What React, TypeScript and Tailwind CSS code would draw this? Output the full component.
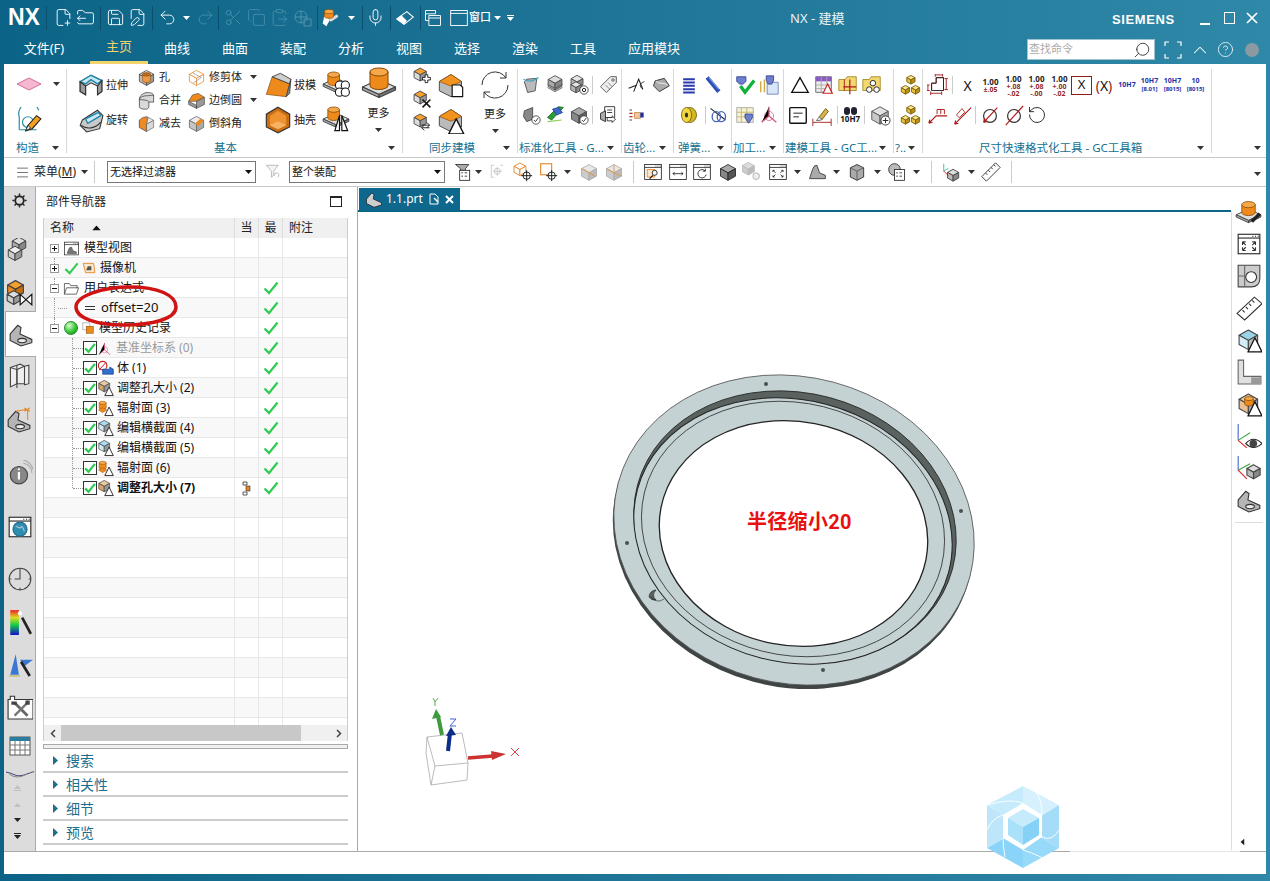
import type { ReactNode } from 'react'
import {
  FilePlus2, FolderOutput, Save, FilePen, Undo2, Redo2, Scissors, Copy, ClipboardPaste, Mic,
  Search, ChevronUp, CircleHelp, RotateCcw, Menu,
} from 'lucide-react'

/* ---------- small drawing helpers ---------- */

function Ic({ s = 22, children }: { s?: number; children: ReactNode }) {
  return (
    <svg width={s} height={s} viewBox="0 0 24 24" className="shrink-0">
      {children}
    </svg>
  )
}

function Iso({ t = '#e4e4e4', l = '#b5b5b5', r = '#8c8c8c', e = '#444', x = 0, y = 0, k = 1 }: { t?: string; l?: string; r?: string; e?: string; x?: number; y?: number; k?: number }) {
  return (
    <g transform={`translate(${x} ${y}) scale(${k})`} stroke={e} strokeWidth={1 / k} strokeLinejoin="round">
      <path d="M12 3 21 8 12 13 3 8Z" fill={t} />
      <path d="M3 8 12 13V22L3 17Z" fill={l} />
      <path d="M21 8 12 13V22L21 17Z" fill={r} />
    </g>
  )
}

function Cyl({ cx = 12, y = 3, rx = 6, h = 8, c = '#ee8a1c', d = '#f5a94a' }: { cx?: number; y?: number; rx?: number; h?: number; c?: string; d?: string }) {
  return (
    <g stroke="#8a4d08" strokeWidth="0.7">
      <path d={`M${cx - rx} ${y}V${y + h}A${rx} ${rx / 2.2} 0 0 0 ${cx + rx} ${y + h}V${y}Z`} fill={c} />
      <ellipse cx={cx} cy={y} rx={rx} ry={rx / 2.2} fill={d} />
    </g>
  )
}

function Plate({ y = 12 }: { y?: number }) {
  return (
    <g stroke="#444" strokeWidth="0.8" strokeLinejoin="round">
      <path d={`M12 ${y} 23 ${y + 5} 12 ${y + 10} 1 ${y + 5}Z`} fill="#dedede" />
      <path d={`M1 ${y + 5}V${y + 7}L12 ${y + 12}V${y + 10}Z`} fill="#aaa" />
      <path d={`M23 ${y + 5}V${y + 7}L12 ${y + 12}V${y + 10}Z`} fill="#777" />
    </g>
  )
}

function Warn({ x = 14, y = 13, s = 10 }: { x?: number; y?: number; s?: number }) {
  return <path d={`M${x} ${y + s} ${x + s / 2} ${y} ${x + s} ${y + s}Z`} fill="#fff" stroke="#111" strokeWidth="1.2" strokeLinejoin="round" />
}

function Badge({ kind = 'check', x = 18, y = 18 }: { kind?: 'check' | 'plus' | 'gear'; x?: number; y?: number }) {
  return (
    <g>
      <circle cx={x} cy={y} r="5" fill="#fff" stroke="#222" strokeWidth="0.9" />
      {kind === 'check' && <path d={`M${x - 2.5} ${y} ${x - 0.6} ${y + 2} ${x + 2.6} ${y - 2.4}`} fill="none" stroke="#222" strokeWidth="1" />}
      {kind === 'plus' && <path d={`M${x - 3} ${y}h6M${x} ${y - 3}v6`} stroke="#222" strokeWidth="1" />}
      {kind === 'gear' && <circle cx={x} cy={y} r="2" fill="none" stroke="#222" strokeWidth="1.2" />}
    </g>
  )
}

function Caret({ c = '#333', className = '' }: { c?: string; className?: string }) {
  return (
    <svg width="7" height="4" viewBox="0 0 7 4" className={`shrink-0 ${className}`}>
      <path d="M0 0h7L3.5 4Z" fill={c} />
    </svg>
  )
}

function Win({ children, s = 20 }: { children?: ReactNode; s?: number }) {
  return (
    <Ic s={s}>
      <rect x="2" y="3" width="20" height="18" fill="#fff" stroke="#222" />
      <path d="M2 6.5h20" stroke="#222" />
      <path d="M15 4.8h1M17.5 4.8h1M20 4.8h1" stroke="#222" />
      {children}
    </Ic>
  )
}

/* ---------- ribbon icons ---------- */

const Pink = () => (
  <svg width="26" height="14" viewBox="0 0 26 14" className="shrink-0">
    <path d="M13 1 25 7 13 13 1 7Z" fill="#f7b7d0" stroke="#cf6f99" />
  </svg>
)
const Sketch = () => (
  <Ic s={26}>
    <path d="M3 21V9A9 9 0 0 1 21 3M3 21h16" fill="none" stroke="#2b8ca8" strokeWidth="1.1" />
    <circle cx="11" cy="14" r="5" fill="none" stroke="#2b8ca8" strokeWidth="1.1" />
    <path d="M9 22 11 17 19 8 23 11 15 20Z" fill="#f3a21f" stroke="#222" strokeWidth="1" />
    <path d="M9 22 11 17 13.5 19.5Z" fill="#fff" stroke="#222" strokeWidth="0.8" />
  </Ic>
)
const Extrude = () => (
  <Ic s={26}>
    <path d="M2 9 12 3 22 8V18L18 21V13L12 10 7 13V21L2 18Z" fill="#d9d9d9" stroke="#333" />
    <path d="M2 9 12 3 22 8 18 11 12 7 7 11Z" fill="#cbe9f4" stroke="#1f86ae" strokeWidth="1.3" />
    <path d="M18 13V21L22 18V8ZM2 9V18L7 21V13Z" fill="#9a9a9a" stroke="#333" />
  </Ic>
)
const Revolve = () => (
  <Ic s={26}>
    <path d="M4 12 18 3 23 8 20 20 8 23 2 17Z" fill="#c9c9c9" stroke="#333" />
    <path d="M7 11 19 5 21 8 9 15Z" fill="#cbe9f4" stroke="#1f86ae" strokeWidth="1.2" />
    <path d="M3 17C8 21 16 20 21 14" fill="none" stroke="#333" />
  </Ic>
)
const Hole = () => (
  <Ic s={19}>
    <Iso t="#ddd" l="#bbb" r="#999" />
    <Cyl cx={12} y={8} rx={5} h={8} c="#eb9a45" d="#b86a1f" />
  </Ic>
)
const Unite = () => (
  <Ic s={19}>
    <path d="M3 11V20C3 22 7 23 10 23S15 22 15 20V14H21V6C21 3 17 2 13 2S3 5 3 11Z" fill="#d9d9d9" stroke="#444" />
    <path d="M3 11C3 8 8 6 12 6S21 5 21 6M15 14C15 12 10 11 3 11" fill="none" stroke="#444" />
  </Ic>
)
const Subtract = () => (
  <Ic s={19}>
    <Iso t="#ededed" l="#e9a26a" r="#d9d9d9" e="#777" />
    <path d="M3 8A9 9 0 0 1 14 5L12 13V22L3 17Z" fill="#ed8a28" stroke="#555" strokeWidth="0.8" />
  </Ic>
)
const Trim = () => (
  <Ic s={19}>
    <Iso t="#fff" l="#fff" r="#fff" e="#e68a2e" />
    <path d="M7 6 18 12 8 19" fill="none" stroke="#999" />
  </Ic>
)
const Blend = () => (
  <Ic s={19}>
    <path d="M2 13 7 5 14 3 22 8 12 13 8 13Z" fill="#ee8a1c" stroke="#444" strokeWidth="0.8" />
    <path d="M2 13 12 18V22L2 17ZM22 8V17L12 22V13Z" fill="#999" stroke="#444" strokeWidth="0.8" />
  </Ic>
)
const Chamfer = () => (
  <Ic s={19}>
    <Iso t="#ececec" l="#c5c5c5" r="#aaa" e="#666" />
    <path d="M10 12 17 6 21 8 14 15Z" fill="#ee8a1c" />
  </Ic>
)
const Draft = () => (
  <Ic s={28}>
    <path d="M2 20 7 5 22 11 19 22Z" fill="#ee8a1c" stroke="#8a4d08" strokeWidth="0.6" />
    <path d="M7 5 14 2 23 7 22 11Z" fill="#cfcfcf" stroke="#444" strokeWidth="0.8" />
    <path d="M22 11 23 7 22 19 19 22Z" fill="#888" stroke="#444" strokeWidth="0.8" />
  </Ic>
)
const Shell = () => (
  <Ic s={28}>
    <path d="M12 1 22 7V18L12 23 2 18V7Z" fill="#ca6e12" stroke="#333" />
    <path d="M12 4 19 8.5V16.5L12 20 5 16.5V8.5Z" fill="#ee9330" />
    <path d="M5 16.5 12 13 19 16.5 12 20Z" fill="#f7b163" />
  </Ic>
)
const Pattern = () => (
  <Ic s={28}>
    <Plate y={7} />
    <Cyl cx={10} y={4} rx={5} h={7} />
    <g fill="#fff" stroke="#111" strokeWidth="0.9">
      <circle cx="15" cy="13" r="3.5" /><circle cx="20" cy="13" r="3.5" />
      <circle cx="15" cy="19" r="3.5" /><circle cx="20" cy="19" r="3.5" />
    </g>
  </Ic>
)
const Mirror = () => (
  <Ic s={28}>
    <Plate y={7} />
    <Cyl cx={10} y={4} rx={5} h={7} />
    <path d="M11 22 15 9V22ZM17 9 22 22H17Z" fill="#fff" stroke="#111" strokeWidth="1" />
  </Ic>
)
const BigCyl = () => (
  <Ic s={36}>
    <Plate y={9} />
    <Cyl cx={12} y={4} rx={6} h={9} />
  </Ic>
)
const SyncBase = ({ children }: { children?: ReactNode }) => (
  <Ic s={21}>
    <Iso x={0} y={0} k={0.78} t="#f6a030" l="#dcdcdc" r="#999" />
    {children}
  </Ic>
)
const SyncBig = ({ children }: { children?: ReactNode }) => (
  <Ic s={28}>
    <path d="M2 9 12 3 21 9 21 18 12 22 2 17Z" fill="#bbb" stroke="#444" strokeWidth="0.8" />
    <path d="M2 9 12 3 21 9 12 13Z" fill="#f29320" stroke="#8a4d08" strokeWidth="0.6" />
    {children}
  </Ic>
)
const Cycle = () => (
  <svg width="30" height="30" viewBox="0 0 30 30" fill="none" stroke="#333" strokeWidth="1" className="shrink-0">
    <path d="M2 15A13 13 0 0 1 26 8M26 2V8H20" />
    <path d="M28 15A13 13 0 0 1 4 22M4 28V22H10" />
  </svg>
)
const Tri = () => (
  <Ic s={22}>
    <path d="M3 20 12 4 21 20Z" fill="#fff" stroke="#111" strokeWidth="1.4" />
  </Ic>
)

/* ---------- ribbon layout ---------- */

function Group({ className, label, labelClass = '', children }: { className: string; label: string; labelClass?: string; children: ReactNode }) {
  return (
    <div className={`flex flex-col h-[93px] relative shrink-0 ${className}`}>
      <div className="flex-1 min-h-0">{children}</div>
      <div className="h-[18px] flex items-center pr-[8px]">
        <span className={`text-[11.5px] text-[#16708f] whitespace-nowrap ${labelClass}`}>{label}</span>
        <Caret className="ml-auto" />
      </div>
      <span className="absolute right-0 top-[5px] bottom-[4px] w-px bg-[#d9d9d9]" />
    </div>
  )
}

function Cell({ children, w = 'w-[24px]' }: { children?: ReactNode; w?: string }) {
  return <span className={`h-[24px] flex items-center justify-center shrink-0 ${w}`}>{children}</span>
}

function Small({ icon, text, caret }: { icon: ReactNode; text: string; caret?: boolean }) {
  return (
    <div className="h-[20px] flex items-center gap-[3px] text-[11px] text-[#222] whitespace-nowrap">
      {icon}
      <span>{text}</span>
      {caret && <Caret className="absolute left-[183px]" />}
    </div>
  )
}

function Big({ icon, text }: { icon: ReactNode; text: string }) {
  return (
    <div className="h-[24px] flex items-center gap-[2px] text-[11px] text-[#222] whitespace-nowrap">
      {icon}
      <span>{text}</span>
    </div>
  )
}

function TwoRows({ top, bottom }: { top: ReactNode; bottom: ReactNode }) {
  return (
    <div className="pt-[9px] flex flex-col gap-[6px]">
      <div className="flex h-[24px] items-center">{top}</div>
      <div className="flex h-[24px] items-center">{bottom}</div>
    </div>
  )
}

const Div = () => <span className="w-px h-[18px] bg-[#ccc] shrink-0" />

function Tol({ a = '±.05', b }: { a?: string; b?: string }) {
  return (
    <span className="flex flex-col items-center w-[23px] shrink-0 text-[7px] leading-[7px] font-bold">
      <span className="text-[#222] text-[8px] leading-[9px]">1.00</span>
      <span className="text-[#8f2a2a]">{a}</span>
      {b && <span className="text-[#8f2a2a]">{b}</span>}
    </span>
  )
}

function Fit({ a, b }: { a: string; b: string }) {
  return (
    <span className="flex flex-col items-center w-[23px] shrink-0 text-[7px] leading-[8px] font-bold text-[#2530a8]">
      <span>{a}</span>
      <span className="text-[6px] leading-[8px]">{b}</span>
    </span>
  )
}

function Ribbon() {
  const gold = (
    <Ic s={22}>
      <Iso x={7} y={0} k={0.5} t="#fbe58a" l="#e7c040" r="#b98f1c" e="#7d6210" />
      <Iso x={1} y={11} k={0.5} t="#fbe58a" l="#e7c040" r="#b98f1c" e="#7d6210" />
      <Iso x={12} y={11} k={0.5} t="#fbe58a" l="#e7c040" r="#b98f1c" e="#7d6210" />
    </Ic>
  )
  return (
    <div className="h-[93px] bg-white flex shrink-0">
      <Group className="w-[63px]" label="构造" labelClass="ml-[12px]">
        <div className="flex flex-col pl-[12px] pt-[13px]">
          <div className="flex items-center gap-[11px] h-[14px]"><Pink /><Caret /></div>
          <div className="mt-[16px]"><Sketch /></div>
        </div>
      </Group>

      <Group className="w-[336px]" label="基本" labelClass="ml-[147px]">
        <div className="flex">
          <div className="pl-[11px] pt-[9px] flex flex-col gap-[11px] w-[70px]">
            <Big icon={<Extrude />} text="拉伸" />
            <Big icon={<Revolve />} text="旋转" />
          </div>
          <div className="pt-[3px] flex flex-col gap-[3px] w-[50px]">
            <Small icon={<Hole />} text="孔" />
            <Small icon={<Unite />} text="合并" />
            <Small icon={<Subtract />} text="减去" />
          </div>
          <div className="pt-[3px] flex flex-col gap-[3px] w-[77px]">
            <Small icon={<Trim />} text="修剪体" caret />
            <Small icon={<Blend />} text="边倒圆" caret />
            <Small icon={<Chamfer />} text="倒斜角" />
          </div>
          <div className="pt-[9px] flex flex-col gap-[11px] w-[58px]">
            <Big icon={<Draft />} text="拔模" />
            <Big icon={<Shell />} text="抽壳" />
          </div>
          <div className="pt-[6px] flex flex-col gap-[7px] w-[32px]">
            <Pattern />
            <Mirror />
          </div>
          <div className="flex flex-col items-center w-[49px] text-[11px] text-[#222] pt-[2px]">
            <BigCyl />
            <span className="mt-[3px]">更多</span>
            <Caret className="mt-[6px]" />
          </div>
        </div>
      </Group>

      <Group className="w-[115px]" label="同步建模" labelClass="ml-[26px]">
        <div className="flex">
          <div className="pl-[9px] pt-[2px] flex flex-col gap-[2px] w-[34px]">
            <SyncBase><path d="M15 10h3v3h3v3h-3v3h-3v-3h-3v-3h3Z" fill="#fff" stroke="#111" /></SyncBase>
            <SyncBase><path d="M12 12 21 21M21 12 12 21" stroke="#111" strokeWidth="1.8" /></SyncBase>
            <SyncBase><path d="M11 15h9M17 12l3 3-3 3M20 18h-9M14 15l-3 3 3 3" fill="none" stroke="#111" /></SyncBase>
          </div>
          <div className="pt-[7px] flex flex-col gap-[7px] w-[36px]">
            <SyncBig><path d="M13 12h7l2 2v8h-9Z" fill="#fff" stroke="#111" /></SyncBig>
            <SyncBig><Warn x={10} y={11} s={13} /></SyncBig>
          </div>
          <div className="flex flex-col items-center w-[44px] text-[11px] text-[#222] pt-[6px]">
            <Cycle />
            <span className="mt-[6px]">更多</span>
            <Caret className="mt-[6px]" />
          </div>
        </div>
      </Group>

      <Group className="w-[104px]" label="标准化工具 - G..." labelClass="ml-[1px]">
        <TwoRows
          top={<>
            <span className="w-[2px]" />
            <Cell><Ic s={20}><path d="M7 5 19 4 17 19 8 21 4 8Z" fill="#bbb" stroke="#444" /><path d="M3 5C9 9 14 8 21 3" fill="none" stroke="#35a7c4" strokeWidth="1.3" /></Ic></Cell>
            <Cell><Ic s={20}><Iso x={1} y={-2} k={0.92} t="#ddd" l="#aaa" r="#888" /><path d="M3 11 12 16 21 11M3 15 12 20 21 15" fill="none" stroke="#555" /></Ic></Cell>
            <Cell><Ic s={20}><Iso x={0} y={-2} k={0.8} /><Iso x={0} y={6} k={0.7} /><Badge kind="gear" /></Ic></Cell>
            <span className="w-[2px]" /><Div />
            <Cell w="w-[29px]"><Ic s={20}><path d="M3 14 15 2 22 2 22 9 10 21Z" fill="#eee" stroke="#444" /><circle cx="18" cy="6" r="1.5" fill="#fff" stroke="#444" /><path d="M9 12 14 17M12 9 17 14" stroke="#777" /></Ic></Cell>
          </>}
          bottom={<>
            <span className="w-[2px]" />
            <Cell><Ic s={20}><path d="M4 7 14 3 14 17 7 20 3 14Z" fill="#888" stroke="#444" /><Badge /></Ic></Cell>
            <Cell><Ic s={20}><path d="M3 15 8 18 22 3 16 2Z" fill="#2c9a35" stroke="#156a1e" /><path d="M9 5 16 3 21 9 14 12Z" fill="#3f67cf" stroke="#223f8e" /><path d="M3 20 20 18" stroke="#8bd05a" strokeWidth="1.5" /></Ic></Cell>
            <Cell><Ic s={20}><Iso t="#aaa" l="#888" r="#666" /><Badge /></Ic></Cell>
            <span className="w-[2px]" /><Div />
            <Cell w="w-[29px]"><Ic s={20}><path d="M8 2h12v13H8Z" fill="#fff" stroke="#222" /><path d="M11 6h6M11 9h6" stroke="#222" /><path d="M3 10 9 7V20L3 17Z" fill="#aaa" stroke="#222" /><path d="M11 15h6v-2l4 4-4 4v-2h-6Z" fill="#fff" stroke="#222" /></Ic></Cell>
          </>}
        />
      </Group>

      <Group className="w-[52px]" label="齿轮..." labelClass="ml-[1px]">
        <TwoRows
          top={<>
            <span className="w-[3px]" />
            <Cell><Ic s={20}><path d="M2 16 12 12M8 20 14 5 19 17" fill="none" stroke="#222" strokeWidth="1.3" /><path d="M19 17C15 14 14 10 21 8" fill="none" stroke="#222" /></Ic></Cell>
            <Cell><Ic s={20}><path d="M5 7 16 4 22 13 10 20 3 13Z" fill="#aaa" stroke="#222" /><path d="M6 7C10 12 14 8 20 12" fill="none" stroke="#fff" /></Ic></Cell>
          </>}
          bottom={<>
            <span className="w-[3px]" />
            <Cell><Ic s={20}><path d="M3 6h3M3 10h3M3 14h3M3 18h3" stroke="#222" /><path d="M3 10h4M3 14h4" stroke="#d22" /><path d="M9 9h7v7H9Z" fill="#f1c79c" stroke="#c78a4a" /><rect x="16" y="9" width="4" height="6" fill="#2330a0" /></Ic></Cell>
          </>}
        />
      </Group>

      <Group className="w-[58px]" label="弹簧..." labelClass="ml-[4px]">
        <TwoRows
          top={<>
            <span className="w-[3px]" />
            <Cell><Ic s={20}><g stroke="#2a3bb0" strokeWidth="2.4"><path d="M5 5h14M5 9h14M5 13h14M5 17h14M5 21h14" /></g></Ic></Cell>
            <Cell><Ic s={20}><path d="M5 3 19 20" stroke="#2c51b8" strokeWidth="5" /><path d="M7 3 19 17" stroke="#8ea4e8" strokeWidth="1.3" /></Ic></Cell>
          </>}
          bottom={<>
            <span className="w-[3px]" />
            <Cell><Ic s={20}><ellipse cx="13" cy="12" rx="8" ry="9" fill="#d5b51c" stroke="#6a5b10" /><ellipse cx="9" cy="12" rx="6" ry="9" fill="#f2d63c" stroke="#6a5b10" /><ellipse cx="9" cy="12" rx="2" ry="3" fill="#333" /></Ic></Cell>
            <span className="w-[4px]" /><Div />
            <Cell><Ic s={20}><path d="M3 4 21 18" stroke="#222" strokeWidth="1.3" /><ellipse cx="16" cy="14" rx="5" ry="6" fill="none" stroke="#4a66bd" strokeWidth="1.6" /><ellipse cx="10" cy="14" rx="5" ry="6" fill="none" stroke="#4a66bd" strokeWidth="1.6" /></Ic></Cell>
          </>}
        />
      </Group>

      <Group className="w-[52px]" label="加工..." labelClass="ml-[1px]">
        <TwoRows
          top={<>
            <span className="w-[1px]" />
            <Cell><Ic s={22}><path d="M3 3h10v5l-3 3H6L3 8Z" fill="#6d7fce" stroke="#3b4a9a" /><path d="M7 13 12 20 22 7" fill="none" stroke="#12b13b" strokeWidth="3.6" /></Ic></Cell>
            <Cell><Ic s={22}><path d="M3 8v12M7 6v14" stroke="#d0a93d" strokeWidth="1.5" /><path d="M10 9h12v13H10Z" fill="#d9e6f7" stroke="#6c89b8" /><path d="M9 2h8v5l-2 4h-4L9 7Z" fill="#6d7fce" stroke="#3b4a9a" /></Ic></Cell>
          </>}
          bottom={<>
            <span className="w-[1px]" />
            <Cell><Ic s={22}><path d="M3 4h18v16H3Z" fill="#f6f2d6" stroke="#a8a8a8" /><path d="M3 9h18M3 14h18M8 4v16M14 4v16" stroke="#c4b56a" /><path d="M12 11h8v4l-4 6-4-6Z" fill="#6d7fce" stroke="#3b4a9a" /></Ic></Cell>
            <Cell><Ic s={22}><circle cx="12" cy="13" r="5" fill="none" stroke="#d87a96" /><path d="M12 3V13L4 20M12 13 20 20" stroke="#d25b82" strokeWidth="1.4" /></Ic></Cell>
          </>}
        />
      </Group>

      <Group className="w-[110px]" label="建模工具 - GC工..." labelClass="ml-[1px]">
        <TwoRows
          top={<>
            <span className="w-[4px]" />
            <Cell><Tri /></Cell>
            <Cell><Ic s={22}><path d="M3 3h17v17H3Z" fill="#eee" stroke="#666" /><path d="M3 3h17v5H3Z" fill="#8a5bc4" /><path d="M3 12h17M3 16h17M9 3v17M15 3v17" stroke="#aaa" /><path d="M11 21 16 11 21 21Z" fill="#fff" stroke="#c22" strokeWidth="1.3" /></Ic></Cell>
            <Cell><Ic s={22}><path d="M2 6h7l2-3h10v15H2Z" fill="#f3d871" stroke="#a78d2c" /><path d="M14 6v16M7 14h14" stroke="#b01818" strokeWidth="1.3" /><path d="M8 6v12" stroke="#b01818" /></Ic></Cell>
            <Cell><Ic s={22}><path d="M2 6h7l2-3h10v15H2Z" fill="#f3d871" stroke="#a78d2c" /><circle cx="9" cy="17" r="3" fill="#fff" stroke="#222" /><circle cx="17" cy="17" r="3" fill="#fff" stroke="#222" /><circle cx="13" cy="10" r="3" fill="#fff" stroke="#222" /></Ic></Cell>
          </>}
          bottom={<>
            <span className="w-[3px]" />
            <Cell><Ic s={22}><rect x="3" y="4" width="18" height="17" rx="1" fill="#fff" stroke="#111" strokeWidth="1.5" /><path d="M7 10h10M7 14h6" stroke="#111" /></Ic></Cell>
            <Cell><Ic s={22}><path d="M2 20h20M2 16v8M22 16v8" stroke="#a22" /><path d="M9 14 16 5 19 8 12 17Z" fill="#d9b24c" stroke="#6a5b10" /><path d="M6 18 9 14 12 17 9 18Z" fill="#eee" stroke="#666" /></Ic></Cell>
            <span className="w-[4px]" /><Div />
            <Cell w="w-[25px]">
              <span className="flex flex-col items-center leading-none">
                <span className="flex gap-px"><span className="w-[6px] h-[8px] rounded-full bg-[#223]" /><span className="w-[6px] h-[8px] rounded-full bg-[#223]" /></span>
                <span className="text-[8px] font-bold text-[#111]">10H7</span>
              </span>
            </Cell>
            <span className="w-[2px]" /><Div />
            <Cell w="w-[29px]"><Ic s={22}><Iso t="#e2e2e2" l="#c8c8c8" r="#aaa" e="#555" /><Badge kind="plus" /></Ic></Cell>
          </>}
        />
      </Group>

      <Group className="w-[29px]" label="?.." labelClass="ml-[1px]">
        <TwoRows top={<><span className="w-[4px]" /><Cell>{gold}</Cell></>} bottom={<><span className="w-[4px]" /><Cell>{gold}</Cell></>} />
      </Group>

      <Group className="w-[289px]" label="尺寸快速格式化工具 - GC工具箱" labelClass="ml-[56px]">
        <TwoRows
          top={<>
            <span className="w-[3px]" />
            <Cell><Ic s={22}><path d="M5 18V10H10V4H18V18M4 21h12M4 19v4M16 19v4M9 1h8M9 0v3M17 0v3M21 5v12M19 5h4M19 17h4M1 12v6M0 12h3M0 18h3" fill="none" stroke="#a41e1e" /><path d="M5 18V10H10V4H18V18Z" fill="none" stroke="#222" /></Ic></Cell>
            <span className="w-[2px]" /><Div /><span className="w-[3px]" />
            <span className="w-[23px] text-center text-[14px] text-[#111] shrink-0">X</span>
            <Tol a="±.05" />
            <Tol a="+.08" b="-.02" />
            <Tol a="+.08" b="-.00" />
            <Tol a="+.00" b="-.02" />
            <span className="w-[21px] h-[19px] border-[1.5px] border-[#8d1c1c] text-[13px] leading-[15px] text-center text-[#111] shrink-0">X</span>
            <span className="w-[24px] text-[14px] text-center text-[#111] shrink-0"><span className="text-[#8d1c1c]">(</span>X<span className="text-[#8d1c1c]">)</span></span>
            <span className="w-[22px] text-[7px] font-bold text-center text-[#2530a8] shrink-0">10H7</span>
            <Fit a="10H7" b="[8.01]" />
            <Fit a="10H7" b="[8015]" />
            <Fit a="10" b="[8015]" />
          </>}
          bottom={<>
            <span className="w-[3px]" />
            <Cell><Ic s={22}><path d="M2 21 10 13H22M2 21l1-4M2 21l4-1" fill="none" stroke="#b01818" strokeWidth="1.2" /><path d="M11 6v5M15 6v5M19 6v5M11 6h8" stroke="#b01818" /></Ic></Cell>
            <Cell><Ic s={22}><path d="M4 22 22 4M4 22l1-4M4 22l4-1" fill="none" stroke="#b01818" strokeWidth="1.2" /><path d="M6 12 12 5 15 9 9 15Z" fill="none" stroke="#b01818" strokeWidth="0.9" /></Ic></Cell>
            <span className="w-[1px]" /><Div /><span className="w-[2px]" />
            <Cell><Ic s={22}><circle cx="12" cy="13" r="7" fill="#fff" stroke="#333" strokeWidth="1.3" /><path d="M20 4 5 20M5 20l1-4M5 20l4-1" fill="none" stroke="#b01818" strokeWidth="1.3" /></Ic></Cell>
            <Cell><Ic s={22}><circle cx="12" cy="13" r="7" fill="#fff" stroke="#333" strokeWidth="1.3" /><path d="M22 2 3 23" stroke="#b01818" strokeWidth="1.3" /></Ic></Cell>
            <Cell w="w-[22px]"><RotateCcw size={20} strokeWidth={1.2} className="text-[#333]" /></Cell>
          </>}
        />
      </Group>

      <div className="flex-1 flex items-end justify-end pr-[5px] pb-[7px]"><Caret /></div>
    </div>
  )
}

/* ---------- top bars ---------- */

function TitleBar() {
  const ic = { size: 19, strokeWidth: 1.15, className: 'text-white shrink-0' }
  const off = { size: 19, strokeWidth: 1, className: 'text-[#4f93ad] shrink-0' }
  const sep = <span className="block w-px h-[24px] bg-[#0a4f6c] shrink-0" />
  return (
    <div className="h-[35px] flex items-center relative text-white shrink-0">
      <span className="ml-[4px] w-[38px] text-[23px] font-bold font-['Liberation_Sans',sans-serif] leading-none">NX</span>
      {sep}
      <div className="flex items-center gap-[2px] ml-[6px]">
        <span className="w-[20px] flex justify-center"><FilePlus2 {...ic} /></span>
        <span className="w-[20px] flex justify-center"><FolderOutput {...ic} /></span>
      </div>
      <span className="ml-[5px]">{sep}</span>
      <div className="flex items-center gap-[2px] ml-[4px]">
        <span className="w-[20px] flex justify-center"><Save {...ic} /></span>
        <span className="w-[20px] flex justify-center"><FilePen {...ic} /></span>
      </div>
      <span className="ml-[5px]">{sep}</span>
      <span className="w-[24px] ml-[2px] flex justify-center"><Undo2 {...ic} /></span>
      <Caret c="#fff" className="ml-[4px]" />
      <span className="w-[22px] ml-[4px] flex justify-center"><Redo2 {...off} /></span>
      <span className="ml-[2px]">{sep}</span>
      <div className="flex items-center gap-[3px] ml-[4px]">
        <span className="w-[20px] flex justify-center"><Scissors {...off} /></span>
        <span className="w-[20px] flex justify-center"><Copy {...off} /></span>
        <span className="w-[20px] flex justify-center"><ClipboardPaste {...off} /></span>
        <span className="w-[20px] flex justify-center"><svg width="19" height="19" viewBox="0 0 19 19" fill="none" stroke="#4f93ad"><circle cx="8" cy="9" r="6" /><path d="M2 9h12M8 3v12M11 11h7v7h-7Z" /></svg></span>
      </div>
      <span className="ml-[5px]">{sep}</span>
      <span className="ml-[1px]"><Ic s={22}><path d="M6 9 12 14 8 21 4 18Z" fill="#fff" /><path d="M10 13 20 8 21 11 13 16Z" fill="#ddd" /><Cyl cx={11} y={5} rx={5} h={5} /></Ic></span>
      <Caret c="#fff" className="ml-[7px]" />
      <span className="ml-[7px]">{sep}</span>
      <span className="w-[24px] flex justify-center"><Mic {...ic} /></span>
      <span className="ml-[3px]">{sep}</span>
      <span className="ml-[3px]"><Ic s={22}><path d="M3 13 14 5 21 11 11 19Z" fill="none" stroke="#fff" strokeWidth="1.2" /><path d="M3 13 8 9 14 15 11 19Z" fill="#fff" /></Ic></span>
      <span className="ml-[4px]">{sep}</span>
      <span className="ml-[2px]"><Ic s={20}><path d="M3 3h12v4H3ZM7 9h14v12H7Z" fill="none" stroke="#fff" strokeWidth="1.1" /><path d="M3 7v8h4M7 12h14" fill="none" stroke="#fff" strokeWidth="1.1" /></Ic></span>
      <span className="ml-[6px]"><Ic s={20}><rect x="2" y="3" width="20" height="18" fill="none" stroke="#fff" strokeWidth="1.1" /><path d="M2 6.5h20" stroke="#fff" strokeWidth="1.1" /></Ic></span>
      <span className="text-[11px] font-medium">窗口</span>
      <Caret c="#fff" className="ml-[3px]" />
      <span className="ml-[6px] flex flex-col gap-[1px]"><span className="w-[7px] h-px bg-white" /><Caret c="#fff" /></span>

      <span className="absolute left-[786px] top-[9px] text-[13px] text-[#e9f2f5] whitespace-nowrap">NX - 建模</span>
      <span className="absolute left-[1108px] top-[12px] text-[13px] leading-[16px] font-bold tracking-[0.6px] font-['Liberation_Sans',sans-serif]">SIEMENS</span>
      <div className="absolute left-[1196px] top-0 h-[35px] flex items-center">
        <span className="w-[10px] h-[2px] bg-white mt-[12px]" />
        <span className="w-[11px] h-[12px] border border-white ml-[14px]" />
        <svg width="12" height="12" viewBox="0 0 12 12" className="ml-[11px]" stroke="#fff" strokeWidth="1.7"><path d="M1 1 11 11M11 1 1 11" /></svg>
      </div>
    </div>
  )
}

function MenuTabs() {
  const tabs = [
    ['文件(F)', 'w-[60px] ml-[10px]'],
    ['曲线', 'w-[58px]'],
    ['曲面', 'w-[58px]'],
    ['装配', 'w-[58px]'],
    ['分析', 'w-[58px]'],
    ['视图', 'w-[58px]'],
    ['选择', 'w-[58px]'],
    ['渲染', 'w-[58px]'],
    ['工具', 'w-[58px]'],
    ['应用模块', 'w-[84px]'],
  ]
  return (
    <div className="h-[29px] flex text-[13px] text-white shrink-0 relative">
      <span className={`h-full flex items-center justify-center pb-[2px] ${tabs[0][1]}`}>{tabs[0][0]}</span>
      <span className="ml-[16px] w-[58px] h-full flex items-center justify-center pb-[2px] text-[#f3d36b] border-b-[3px] border-[#f3d36b]">主页</span>
      {tabs.slice(1).map(([t, c]) => (
        <span key={t} className={`h-full flex items-center justify-center pb-[2px] ${c}`}>{t}</span>
      ))}
      <div className="absolute left-[1023px] top-[4px] w-[128px] h-[21px] bg-white border border-[#9fc2d0] flex items-center pl-[1px] pr-[3px] justify-between text-[11px] text-[#aaa]">
        <span>查找命令</span>
        <Search size={18} strokeWidth={1.1} className="text-[#222] -scale-x-100" />
      </div>
      <div className="absolute left-[1160px] top-[4px] h-[21px] flex items-center text-white">
        <svg width="18" height="18" viewBox="0 0 18 18" fill="none" stroke="#fff" strokeWidth="1.2"><path d="M1 5V1H5M13 1H17V5M17 13V17H13M5 17H1V13" /></svg>
        <ChevronUp size={22} strokeWidth={1.1} className="ml-[7px]" />
        <CircleHelp size={17} strokeWidth={1.1} className="ml-[6px]" />
        <span className="ml-[11px] w-[14px] h-[14px] rounded-full bg-[#8a9aa1]" />
      </div>
    </div>
  )
}

function Select({ className, text }: { className: string; text: string }) {
  return (
    <div className={`h-[22px] border border-[#777] bg-white flex items-center justify-between pl-[2px] pr-[3px] text-[11px] text-[#111] shrink-0 ${className}`}>
      <span>{text}</span>
      <Caret c="#111" />
    </div>
  )
}

function Slot({ w, children }: { w: string; children: ReactNode }) {
  return <span className={`flex items-center justify-center shrink-0 ${w}`}>{children}</span>
}

function Toolbar() {
  const tbSep = <span className="block w-px h-[22px] bg-[#ccc] shrink-0" />
  return (
    <div className="h-[30px] bg-white border-y border-[#c9c9c9] flex items-center shrink-0 relative">
      <Menu size={15} strokeWidth={1} className="ml-[11px] text-[#222]" />
      <span className="ml-[4px] text-[12px] text-[#222] whitespace-nowrap">菜单(<span className="underline">M</span>)</span>
      <Caret className="ml-[5px]" />
      <span className="ml-[6px]">{tbSep}</span>
      <span className="ml-[12px]"><Select className="w-[149px]" text="无选择过滤器" /></span>
      <span className="w-[33px] flex justify-center">
        <Ic s={18}><path d="M3 3h16l-6 8v5l-3 3v-8Z" fill="#f4f4f4" stroke="#aaa" /><path d="M14 17a3 3 0 1 1 4 2" fill="none" stroke="#aaa" /></Ic>
      </span>
      <Select className="w-[156px]" text="整个装配" />

      <Slot w="w-[23px] ml-[6px]"><Ic s={20}><path d="M3 3h16l-4 5v2H9V8Z" fill="#aaa" stroke="#333" /><rect x="8" y="10" width="12" height="12" fill="#fff" stroke="#222" /><path d="M10 13h2M14 13h3M10 17h2M14 17h3" stroke="#222" /></Ic></Slot>
      <Caret className="ml-[1px]" />
      <Slot w="w-[32px]"><Ic s={18}><path d="M7 3H3V19H7M15 3h4" fill="none" stroke="#bbb" /><circle cx="11" cy="11" r="4" fill="none" stroke="#bbb" /><path d="M11 5v12M5 11h12" stroke="#bbb" /></Ic></Slot>
      <Slot w="w-[18px]"><Ic s={22}><Iso k={0.72} t="#fff" l="#fff" r="#fff" e="#e58526" /><circle cx="16" cy="16" r="4" fill="#fff" stroke="#111" /><path d="M16 10v12M10 16h12" stroke="#111" /></Ic></Slot>
      <Slot w="w-[32px]"><Ic s={22}><rect x="4" y="3" width="12" height="12" fill="none" stroke="#e58526" strokeWidth="1.2" /><circle cx="16" cy="16" r="4" fill="#fff" stroke="#111" /><path d="M16 10v12M10 16h12" stroke="#111" /></Ic></Slot>
      <Caret />
      <Slot w="w-[36px]"><Ic s={20}><Iso t="#e8e8e8" l="#ccc" r="#bbb" e="#aaa" /><path d="M4 8 19 17" stroke="#e59443" strokeWidth="1.2" /></Ic></Slot>
      <Slot w="w-[14px]"><Ic s={20}><Iso t="#e8e8e8" l="#ccc" r="#bbb" e="#aaa" /><path d="M12 3V13L21 17M12 13 3 8" fill="none" stroke="#e59443" /></Ic></Slot>
      <span className="ml-[12px]">{tbSep}</span>
      <Slot w="w-[24px] ml-[7px]"><Win><rect x="5" y="9" width="9" height="9" fill="#fbe7c9" stroke="#e58526" /><circle cx="14" cy="13" r="3" fill="#fff" stroke="#111" /><path d="M12 16 8 20" stroke="#111" strokeWidth="1.5" /></Win></Slot>
      <Slot w="w-[26px]"><Win><path d="M6 14h12M6 14l2-2M6 14l2 2M18 14l-2-2M18 14l-2 2" fill="none" stroke="#222" /></Win></Slot>
      <Slot w="w-[22px]"><Win><path d="M16 11a5 5 0 1 0 1 4M16 8v3h-3" fill="none" stroke="#222" /></Win></Slot>
      <Slot w="w-[30px]"><Ic s={20}><Iso t="#aaa" l="#888" r="#555" e="#222" /></Ic></Slot>
      <Slot w="w-[18px]"><Ic s={20}><Iso t="#ddd" l="#ccc" r="#bbb" e="#bbb" x={-2} y={-2} k={0.8} /><circle cx="17" cy="17" r="4" fill="#eee" stroke="#aaa" /></Ic></Slot>
      <Slot w="w-[33px]"><Win><path d="M6 10 9 13M6 10h2M6 10v2M18 10l-3 3M18 10h-2M18 10v2M6 18l3-3M6 18h2M6 18v-2M18 18l-3-3M18 18h-2M18 18v-2" fill="none" stroke="#222" /></Win></Slot>
      <Caret />
      <Slot w="w-[32px]"><Ic s={20}><path d="M3 20 7 8Q9 3 12 4L15 13 22 16V20Z" fill="#aaa" stroke="#333" /></Ic></Slot>
      <Caret />
      <Slot w="w-[34px]"><Ic s={20}><path d="M4 7 12 3 20 7V18L12 22 4 18Z" fill="#aaa" stroke="#222" /><path d="M4 7 12 11 20 7M12 11V22" fill="none" stroke="#555" /></Ic></Slot>
      <Caret />
      <Slot w="w-[32px]"><Ic s={20}><circle cx="9" cy="9" r="7" fill="#bbb" stroke="#222" /><rect x="9" y="9" width="12" height="13" fill="#fff" stroke="#222" /><path d="M11 13h2M15 13h3M11 17h2M15 17h3" stroke="#222" /></Ic></Slot>
      <Caret />
      <span className="ml-[11px]">{tbSep}</span>
      <Slot w="w-[32px] ml-[4px]"><Ic s={22}><Iso x={5} y={7} k={0.68} t="#ddd" l="#bbb" r="#888" /><path d="M3 3V11L8 8" fill="none" stroke="#3b9" /><path d="M3 11 8 16" stroke="#d22" /></Ic></Slot>
      <Caret />
      <Slot w="w-[32px]"><Ic s={22}><path d="M2 17 17 2 22 7 7 22Z" fill="#fff" stroke="#333" /><path d="M6 13 8 15M9 10 11 12M12 7 14 9M15 4 17 6" stroke="#333" /></Ic></Slot>
      <span className="ml-[4px]">{tbSep}</span>
      <Caret c="#333" className="absolute left-[1250px] top-[14px]" />
    </div>
  )
}

/* ---------- left rail ---------- */

function LeftRail() {
  return (
    <div className="w-[32px] bg-[#dcdcdc] border-r border-[#aaa] flex flex-col items-center shrink-0">
      <span className="mt-[1px] h-[24px] flex items-center"><Ic s={17}><circle cx="12" cy="12" r="6" fill="none" stroke="#222" strokeWidth="2.5" /><path d="M12 2v3M12 19v3M2 12h3M19 12h3M5 5l2 2M17 17l2 2M19 5l-2 2M7 17l-2 2" stroke="#222" strokeWidth="2" /></Ic></span>
      <span className="mt-[26px] h-[24px] flex items-center -ml-[4px]"><Ic s={24}><Iso x={4} y={-3} k={0.75} t="#ddd" l="#aaa" r="#888" /><Iso x={0} y={6} k={0.75} t="#eee" l="#ccc" r="#999" /></Ic></span>
      <span className="mt-[18px] h-[24px] flex items-center -ml-[2px]"><Ic s={28}><Iso x={0} y={0} k={0.75} t="#f5a030" l="#ee8a1c" r="#c36f10" /><Iso x={0} y={9} k={0.62} t="#ddd" l="#ccc" r="#999" /><path d="M13 14 23 23V14L13 23Z" fill="#fff" stroke="#111" /></Ic></span>
      <span className="mt-[7px] h-[46px] w-[31px] ml-[1px] bg-white border-y border-l border-[#aaa] flex items-center justify-center -mr-[1px] z-10 relative">
        <Ic s={26}><path d="M2 18V12L9 4 12 6 11 12 22 17V20L12 23Z" fill="#b5b5b5" stroke="#333" /><ellipse cx="13" cy="18" rx="4" ry="2" fill="#eee" stroke="#333" /></Ic>
      </span>
      <span className="mt-[6px] h-[24px] flex items-center -ml-[4px]"><Ic s={26}><path d="M5 5 11 3V20L5 23ZM11 3 14 2 18 4V20L11 20ZM18 4 22 3V20L18 21Z" fill="#eee" stroke="#444" /><path d="M5 5 11 7V24M11 7 18 4" fill="none" stroke="#444" /></Ic></span>
      <span className="mt-[21px] h-[24px] flex items-center -ml-[1px]"><Ic s={26}><path d="M2 18V12L9 4 12 6 11 12 22 17V20L12 23Z" fill="#b5b5b5" stroke="#333" /><ellipse cx="13" cy="18" rx="4" ry="2" fill="#eee" stroke="#333" /><path d="M9 4 20 2M20 2V12M17 1l5 3M22 1l-5 3" fill="none" stroke="#e58526" /></Ic></span>
      <span className="mt-[29px] h-[24px] flex items-center"><Ic s={26}><circle cx="11" cy="14" r="8" fill="#888" stroke="#444" /><path d="M11 11v7" stroke="#fff" strokeWidth="2" /><circle cx="11" cy="8.5" r="1" fill="#fff" /><path d="M15 3a9 9 0 0 1 8 9M15 0a12 12 0 0 1 9 9" fill="none" stroke="#aaa" /></Ic></span>
      <span className="mt-[30px] h-[24px] flex items-center"><Win s={26}><circle cx="12" cy="14" r="6.5" fill="#2e8db0" stroke="#1d6a85" /><path d="M8 11q4 3 5 1t3 4" stroke="#bcd" fill="none" /></Win></span>
      <span className="mt-[28px] h-[24px] flex items-center"><Ic s={26}><circle cx="12" cy="12" r="10" fill="none" stroke="#444" /><path d="M12 2V12H7M12 20v2M2 12h2M20 12h2" fill="none" stroke="#444" /></Ic></span>
      <span className="mt-[19px] h-[24px] flex items-center">
        <Ic s={26}>
          <defs><linearGradient id="rb" x1="0" y1="0" x2="0" y2="1"><stop offset="0" stopColor="#e22" /><stop offset="0.3" stopColor="#dd2" /><stop offset="0.6" stopColor="#1c4" /><stop offset="1" stopColor="#11c" /></linearGradient></defs>
          <rect x="3" y="1" width="8" height="23" fill="url(#rb)" />
          <path d="M14 8 22 23" stroke="#222" strokeWidth="2.5" />
          <circle cx="12" cy="4" r="2" fill="#fff" />
        </Ic>
      </span>
      <span className="mt-[18px] h-[24px] flex items-center">
        <Ic s={26}><path d="M3 22 8 3 11 22Z" fill="#3a77d4" /><path d="M12 8h12l-8 6Z" fill="#3a77d4" /><path d="M13 10 21 23" stroke="#222" strokeWidth="2.5" /><path d="M2 23h10" stroke="#b9b23a" /></Ic>
      </span>
      <span className="mt-[19px] h-[24px] flex items-center">
        <Ic s={26}>
          <path d="M1 23V5H3V2H7V5H24V23Z" fill="#fff" stroke="#333" />
          <path d="M7 8 19 20" stroke="#666" strokeWidth="2.6" />
          <path d="M19 8 7 20" stroke="#777" strokeWidth="2.2" />
          <path d="M4 7h5v3H4ZM17 6h4v4h-4Z" fill="#444" />
        </Ic>
      </span>
      <span className="mt-[15px] h-[24px] flex items-center">
        <Ic s={24}><rect x="2" y="3" width="20" height="18" fill="#fff" stroke="#555" /><rect x="2" y="3" width="20" height="4" fill="#2a7d9f" /><path d="M2 11h20M2 16h20M7 7v14M12 7v14M17 7v14" stroke="#777" /></Ic>
      </span>
      <span className="mt-[12px] h-[10px] flex items-center">
        <svg width="30" height="10" viewBox="0 0 30 10"><path d="M1 2Q6 3 10 5T22 4T29 2" fill="none" stroke="#447" /><path d="M4 4Q12 10 22 4" fill="none" stroke="#888" /></svg>
      </span>
      <span className="mt-[5px] flex flex-col items-center">
        <span className="flex flex-col items-center gap-[1px] mr-[4px]"><Caret c="#c0c0c0" className="rotate-180" /><span className="w-[7px] h-px bg-[#c0c0c0]" /></span>
        <Caret c="#c0c0c0" className="rotate-180 mt-[12px] mr-[4px]" />
        <Caret c="#222" className="mt-[11px] mr-[4px]" />
        <span className="mt-[11px] mr-[4px] flex flex-col gap-[1px] items-center"><span className="w-[7px] h-px bg-[#222]" /><Caret c="#222" /></span>
      </span>
    </div>
  )
}

/* ---------- part navigator ---------- */

const Tick = ({ s = 16, w = 2.2 }: { s?: number; w?: number }) => (
  <svg width={s} height={s} viewBox="0 0 16 16" className="shrink-0">
    <path d="M1.5 8.5 6 13 14.5 2.5" fill="none" stroke="#2ecc52" strokeWidth={w} />
  </svg>
)
const CheckBox = () => (
  <span className="w-[14px] h-[14px] border border-[#333] bg-white flex items-center justify-center shrink-0">
    <Tick s={12} w={3} />
  </span>
)
const Expander = ({ open, line = true }: { open?: boolean; line?: boolean }) => (
  <span className="w-[9px] h-[9px] border border-[#999] bg-white flex items-center justify-center relative shrink-0">
    <span className="w-[5px] h-px bg-[#111]" />
    {!open && <span className="absolute w-px h-[5px] bg-[#111]" />}
    {line && <span className="absolute left-[3px] -top-[7px] h-[6px] border-l border-dotted border-[#999]" />}
  </span>
)

const FeatTri = ({ kind }: { kind: 'hole' | 'rad' | 'sec' }) => (
  <Ic s={17}>
    {kind === 'hole' && <Iso x={0} y={-2} k={0.85} t="#e8c9a0" l="#d8a468" r="#999" />}
    {kind === 'rad' && <><Cyl cx={8} y={4} rx={5} h={7} /><path d="M2 14 8 11 14 14 8 18Z" fill="#ee8a1c" stroke="#8a4d08" strokeWidth="0.5" /></>}
    {kind === 'sec' && <Iso x={0} y={-2} k={0.85} t="#a8dcef" l="#d4ecf5" r="#999" />}
    <Warn x={11} y={10} s={12} />
  </Ic>
)

const rowGrid = 'h-[20px] grid grid-cols-[190px_24px_24px_1fr] border-b border-[#e8e8e8]'
const colLine = 'border-l border-[#e8e8e8]'

function TreeRow({ i, lead, text, className = 'text-[#111]', now, latest = true }: { i: number; lead: ReactNode; text: ReactNode; className?: string; now?: ReactNode; latest?: boolean }) {
  return (
    <div className={`${rowGrid} ${i % 2 ? 'bg-[#f8f8f8]' : 'bg-white'}`}>
      <div className="flex items-center h-[20px] whitespace-nowrap">
        {lead}
        <span className={`text-[12px] ${className}`}>{text}</span>
      </div>
      <div className={`${colLine} flex items-center justify-center`}>{now}</div>
      <div className={`${colLine} flex items-center justify-center`}>{latest && <Tick />}</div>
      <div className={colLine} />
    </div>
  )
}

function Child({ last, children }: { last?: boolean; children: ReactNode }) {
  return (
    <>
      <span className={`ml-[28px] border-l border-dotted border-[#999] ${last ? 'h-[10px] self-start' : 'h-full'}`} />
      <span className="w-[10px] border-t border-dotted border-[#999]" />
      {children}
    </>
  )
}

function NavTree() {
  const features: [ReactNode, string][] = [
    [<FeatTri kind="hole" />, '调整孔大小 (2)'],
    [<FeatTri kind="rad" />, '辐射面 (3)'],
    [<FeatTri kind="sec" />, '编辑横截面 (4)'],
    [<FeatTri kind="sec" />, '编辑横截面 (5)'],
    [<FeatTri kind="rad" />, '辐射面 (6)'],
  ]
  const blanks = Array.from({ length: 12 }, (_, k) => k + 13)
  const cam = (
    <Ic s={14}><path d="M2 4H20L22 20H6Z" fill="#fbe7c9" stroke="#e58526" strokeWidth="1.5" /><path d="M7 16 10 9H16V16Z" fill="#555" /></Ic>
  )
  return (
    <div className="flex-1 min-h-0 overflow-hidden">
      <TreeRow i={0} latest={false} className="ml-[4px] text-[#111]" text="模型视图" lead={
        <span className="flex items-center">
          <span className="ml-[6px]"><Expander line={false} /></span>
          <span className="ml-[4px]"><Win s={17}><path d="M6 18 9 11 12 10 14 15 19 17V19H6Z" fill="#777" stroke="#333" strokeWidth="0.7" /></Win></span>
        </span>
      } />
      <TreeRow i={1} latest={false} className="ml-[4px] text-[#111]" text="摄像机" lead={
        <span className="flex items-center">
          <span className="ml-[6px]"><Expander /></span>
          <span className="ml-[5px]"><Tick s={15} /></span>
          <span className="ml-[3px]">{cam}</span>
        </span>
      } />
      <TreeRow i={2} className="ml-[4px] text-[#111]" text="用户表达式" lead={
        <span className="flex items-center">
          <span className="ml-[6px]"><Expander open /></span>
          <span className="ml-[4px]"><Ic s={17}><path d="M2 20V5H9L11 8H20V11H5L2 20H19L22 11H19" fill="#fff" stroke="#444" strokeWidth="1.1" /></Ic></span>
        </span>
      } />
      <TreeRow i={3} className="text-[#111]" text={<span className="text-[13px]">offset=20</span>} lead={
        <span className="flex items-center h-[20px]">
          <span className="ml-[10px] h-full border-l border-dotted border-[#999]" />
          <span className="w-[9px] ml-[3px] border-t border-dotted border-[#999]" />
          <span className="ml-[18px] mr-[6px] w-[10px] h-[4px] border-y border-[#333] shrink-0" />
        </span>
      } />
      <TreeRow i={4} className="ml-[4px] text-[#111]" text="模型历史记录" lead={
        <span className="flex items-center">
          <span className="ml-[6px]"><Expander open /></span>
          <span className="ml-[5px] w-[14px] h-[14px] rounded-full bg-[radial-gradient(circle_at_35%_30%,#d8ffd0,#36c636_55%,#1a8a1a)] border border-[#2a8a2a] shrink-0" />
          <span className="ml-[3px]"><Ic s={14}><path d="M3 3h12v12H3Z" fill="#fff" stroke="#888" /><rect x="9" y="9" width="12" height="12" fill="#ee8a1c" stroke="#8a4d08" /></Ic></span>
        </span>
      } />
      <TreeRow i={5} className="ml-[4px] text-[#9a9a9a]" text="基准坐标系 (0)" lead={
        <Child><CheckBox /><Ic s={15}><circle cx="12" cy="14" r="5" fill="none" stroke="#d87a96" /><path d="M12 3V14L3 22M12 14 21 22" stroke="#d25b82" strokeWidth="1.4" /></Ic></Child>
      } />
      <TreeRow i={6} className="ml-[3px] text-[#111]" text="体 (1)" lead={
        <Child><CheckBox /><Ic s={17}><circle cx="8" cy="8" r="6" fill="none" stroke="#c81f1f" strokeWidth="1.6" /><path d="M3 14 13 3" stroke="#c81f1f" strokeWidth="1.4" /><path d="M8 13h10v-3l5 3v7H8Z" fill="#2f6fd0" stroke="#173f86" /></Ic></Child>
      } />
      {features.map(([ic, t], k) => (
        <TreeRow key={t} i={k + 7} className="ml-[3px] text-[#111]" text={t} lead={<Child><CheckBox />{ic}</Child>} />
      ))}
      <TreeRow i={12} className="ml-[3px] font-bold text-[#111]" text="调整孔大小 (7)" now={
        <svg width="9" height="15" viewBox="0 0 9 15" className="shrink-0"><path d="M1 1h4v3H1ZM1 11h4v3H1Z" fill="#fff" stroke="#333" strokeWidth="0.8" /><rect x="4" y="5" width="4" height="5" fill="#e58526" stroke="#333" strokeWidth="0.6" /></svg>
      } lead={<Child last><CheckBox /><FeatTri kind="hole" /></Child>} />
      {blanks.map((k) => (
        <div key={k} className={`${rowGrid} ${k % 2 ? 'bg-[#f8f8f8]' : 'bg-white'}`}>
          <span /><span className={colLine} /><span className={colLine} /><span className={colLine} />
        </div>
      ))}
    </div>
  )
}

function NavPanel() {
  const sections = ['搜索', '相关性', '细节', '预览']
  return (
    <div className="w-[322px] bg-white border-r border-[#aaa] flex flex-col pl-[7px] pr-[9px] shrink-0">
      <div className="h-[31px] flex items-center justify-between pl-[3px] pr-[6px] pb-[2px] text-[12px] text-[#222] shrink-0">
        <span>部件导航器</span>
        <span className="w-[12px] h-[11px] border border-[#222] border-t-[2px]" />
      </div>
      <div className="h-[507px] border-x border-[#ccc] flex flex-col shrink-0">
        <div className="h-[20px] bg-[#f0f0f0] grid grid-cols-[190px_24px_24px_1fr] text-[12px] text-[#222] items-center shrink-0">
          <span className="flex items-center pl-[6px] gap-[19px]">名称 <Caret c="#111" className="rotate-180 scale-125" /></span>
          <span className="border-l border-[#ddd] h-full flex items-center justify-center">当</span>
          <span className="border-l border-[#ddd] h-full flex items-center justify-center">最</span>
          <span className="border-l border-[#ddd] h-full flex items-center pl-[6px]">附注</span>
        </div>
        <NavTree />
      </div>
      <div className="h-[16px] bg-[#f0f0f0] flex items-center border-x border-[#ccc] shrink-0">
        <span className="w-[17px]"><svg width="6" height="9" viewBox="0 0 6 9" className="mx-auto"><path d="M5 1 1.5 4.5 5 8" fill="none" stroke="#444" strokeWidth="1.5" /></svg></span>
        <span className="w-[240px] h-full bg-[#c8c8c8]" />
        <span className="flex-1"><svg width="6" height="9" viewBox="0 0 6 9" className="ml-[35px]"><path d="M1 1 4.5 4.5 1 8" fill="none" stroke="#444" strokeWidth="1.5" /></svg></span>
      </div>
      <div className="mt-[3px] h-[5px] bg-[#f0f0f0] border border-[#aaa] shrink-0" />
      {sections.map((s) => (
        <div key={s} className="h-[24px] border-b-[2px] border-[#ccc] flex items-center text-[14px] text-[#1b6f8e] shrink-0">
          <svg width="5" height="9" viewBox="0 0 5 9" className="ml-[10px] mr-[8px] shrink-0"><path d="M0 0 5 4.5 0 9Z" fill="#1b6f8e" /></svg>
          {s}
        </div>
      ))}
    </div>
  )
}

/* ---------- graphics window ---------- */

function Ring() {
  const rot = (a: number, x: number, y: number) => `rotate(${a} ${x} ${y})`
  return (
    <svg width="390" height="340" viewBox="600 360 390 340" className="absolute left-[241px] top-[148px]">
      <ellipse cx="794" cy="534" rx="182" ry="153" transform={rot(15, 794, 534)} fill="#3f4545" />
      <ellipse cx="795" cy="530" rx="182" ry="153" transform={rot(15, 795, 530)} fill="#c4d2d4" stroke="#555" strokeWidth="0.8" />
      <ellipse cx="796" cy="527" rx="163" ry="134" transform={rot(15, 796, 527)} fill="#59625f" stroke="#222" strokeWidth="0.8" />
      <ellipse cx="794" cy="531" rx="161" ry="131" transform={rot(15, 794, 531)} fill="#c4d2d4" stroke="#222" strokeWidth="1" />
      <ellipse cx="794" cy="529" rx="153" ry="126" transform={rot(14, 794, 529)} fill="none" stroke="#333" strokeWidth="0.8" />
      <ellipse cx="794.5" cy="533.5" rx="135" ry="112" transform={rot(11, 794.5, 533.5)} fill="#fff" stroke="#222" strokeWidth="1.3" />
      <g fill="#4a5252">
        <circle cx="767" cy="384" r="2" /><circle cx="962" cy="511" r="2" />
        <circle cx="628" cy="543" r="2" /><circle cx="824" cy="670" r="2" />
      </g>
      <path d="M650 597a7 7 0 0 1 7-7q-5 5 0 10a7 7 0 0 1-7-3Z" fill="#59625f" stroke="#222" strokeWidth="0.6" />
      <path d="M652 597Q658 604 665 599" fill="none" stroke="#222" strokeWidth="0.6" />
    </svg>
  )
}

function Triad() {
  return (
    <svg width="110" height="100" viewBox="420 695 110 100" className="absolute left-[61px] top-[483px]">
      <path d="M428 737 463 733 469 763 468 780 432 785 427 753ZM428 737 436 766 469 763M436 766 432 785" fill="#fff" stroke="#aaa" strokeWidth="0.8" />
      <path d="M443 735 439 716" stroke="#3d9a3d" strokeWidth="4" />
      <path d="M433 719 437 709 442 717Z" fill="#3d9a3d" />
      <path d="M449 751 451 733" stroke="#0b2d8a" strokeWidth="4" />
      <path d="M447 736 452 727 457 735Z" fill="#0b2d8a" />
      <path d="M469 758 494 756" stroke="#cc3232" strokeWidth="3.5" />
      <path d="M492 751 507 754 493 760Z" fill="#cc3232" />
      <path d="M434 698 436 702 439 698M436 702V706" fill="none" stroke="#5da85d" />
      <path d="M451 719h6l-6 7h6" fill="none" stroke="#3f62d6" />
      <path d="M512 748 520 756M520 748 512 756" stroke="#d04848" />
    </svg>
  )
}

function Viewport() {
  const rail: ReactNode[] = [
    <Ic s={27}><Plate y={9} /><Cyl cx={12} y={5} rx={6} h={7} /><path d="M15 20 22 13" stroke="#222" strokeWidth="3" /></Ic>,
    <Win s={26}><path d="M6 10 9 13M6 10h3M6 10v3M18 10l-3 3M18 10h-3M18 10v3M6 18l3-3M6 18h3M6 18v-3M18 18l-3-3M18 18h-3M18 18v-3" fill="none" stroke="#333" /></Win>,
    <Ic s={26}><path d="M2 2H22V14Q22 22 14 22H2Z" fill="#ccc" stroke="#444" /><path d="M2 12H8M8 2V22" stroke="#666" /><circle cx="14" cy="13" r="5" fill="#fff" stroke="#333" /></Ic>,
    <Ic s={26}><path d="M1 17 17 2 24 8 8 23Z" fill="#fff" stroke="#333" /><path d="M6 14 8 16M9 11 11 13M12 8 14 10M15 5 17 7" stroke="#333" /></Ic>,
    <Ic s={26}><Iso k={0.95} t="#9bd3e8" l="#d5edf6" r="#bbb" /><Warn x={11} y={10} s={13} /></Ic>,
    <Ic s={26}><path d="M2 1H7V16H23V23H2Z" fill="#e0e0e0" stroke="#666" /><rect x="14" y="17" width="9" height="6" fill="#999" /></Ic>,
    <Ic s={26}><Iso k={0.95} t="#e8c9a0" l="#e9c093" r="#aaa" /><Cyl cx={12} y={7} rx={4} h={5} /><Warn x={11} y={10} s={13} /></Ic>,
    <Ic s={26}><path d="M2 1V16" stroke="#3f62d6" /><path d="M2 16 13 9" stroke="#39a63a" /><path d="M2 16 10 23" stroke="#d22" /><path d="M9 19Q16 11 24 19 16 26 9 19Z" fill="#fff" stroke="#222" /><circle cx="16" cy="19" r="3.5" fill="#444" /></Ic>,
    <Ic s={26}><path d="M2 1V14" stroke="#3f62d6" /><path d="M2 14 13 8" stroke="#39a63a" /><path d="M2 14 10 22" stroke="#d22" /><Iso x={8} y={7} k={0.68} t="#ddd" l="#bbb" r="#888" /></Ic>,
    <Ic s={26}><path d="M2 18V12L9 4 12 6 11 12 22 17V20L12 23Z" fill="#b5b5b5" stroke="#333" /><ellipse cx="13" cy="18" rx="4" ry="2" fill="#eee" stroke="#333" /></Ic>,
  ]
  return (
    <div className="flex-1 flex min-w-0 bg-white">
      <div className="flex-1 flex flex-col min-w-0">
        <div className="h-[25px] border-b-[2px] border-[#0b6687] flex pt-px pl-px shrink-0">
          <div className="w-[101px] bg-[#0e678c] flex items-center text-white text-[12px] pl-[6px]">
            <Ic s={18}><path d="M2 18V12L9 4 12 6 11 12 22 17V20L12 23Z" fill="#cfcfcf" stroke="#222" /></Ic>
            <span className="ml-[3px]">1.1.prt</span>
            <svg width="10" height="12" viewBox="0 0 10 12" className="ml-[6px]" fill="none" stroke="#fff"><path d="M1 1H6L9 4V11H1Z" /><path d="M5 5 9 9" strokeWidth="1.5" /></svg>
            <svg width="9" height="9" viewBox="0 0 9 9" className="ml-[6px]" stroke="#fff" strokeWidth="2"><path d="M1 1 8 8M8 1 1 8" /></svg>
          </div>
        </div>
        <div className="flex-1 relative">
          <Ring />
          <span className="absolute left-[389px] top-[298px] text-[20px] leading-[24px] tracking-[0.3px] font-bold text-[#e81010] whitespace-nowrap font-['Roboto','Noto_Sans_CJK_SC',sans-serif]">半径缩小20</span>
          <Triad />
        </div>
      </div>
      <div className="w-[35px] flex flex-col items-center pt-[9px] shrink-0 relative">
        <span className="absolute left-0 top-[24px] bottom-0 w-px bg-[#ddd]" />
        {rail.map((ic, k) => (
          <span key={k} className="h-[32px] flex items-center justify-center">{ic}</span>
        ))}
        <span className="w-[28px] h-px bg-[#ddd] mt-[6px]" />
        <Caret c="#222" className="absolute left-[8px] bottom-[7px] rotate-90" />
      </div>
    </div>
  )
}

function Watermark() {
  return (
    <svg width="104" height="111" viewBox="0 0 104 111" className="absolute left-[960px] top-[770px]">
      <path d="M63 16 99 35 63 57Z" fill="#d6f0fd" />
      <path d="M99 35V78L63 57Z" fill="#a5ddf9" />
      <path d="M99 78 63 98 63 57Z" fill="#97d9f9" />
      <path d="M63 98 27 78 63 57Z" fill="#8bd4f9" />
      <path d="M27 78V35L63 57Z" fill="#bde6fb" />
      <path d="M27 35 63 16V57Z" fill="#c6ebfc" />
      <path d="M63 33 82 45V67L63 80 43 68V45Z" fill="#fff" />
      <path d="M63 39 79 48 63 57 48 48Z" fill="#c6ebfc" />
      <path d="M48 48 63 57V75L48 65Z" fill="#a9e0fa" />
      <path d="M79 48V65L63 75V57Z" fill="#86d1f6" />
      <g fill="none" stroke="#fff" strokeWidth="0.9">
        <path d="M27 35Q50 28 63 33M77 23Q82 32 82 45M99 60Q92 72 82 67M83 88Q70 82 63 80M45 87Q43 76 43 68M27 60Q32 48 43 45" />
      </g>
    </svg>
  )
}

export default function App() {
  return (
    <div className="w-[1270px] h-[881px] relative overflow-hidden px-[4px] flex flex-col bg-gradient-to-r from-[#0b6487] to-[#2f88a8] font-['Noto_Sans','Noto_Sans_CJK_SC',sans-serif]">
      <TitleBar />
      <MenuTabs />
      <Ribbon />
      <Toolbar />
      <div className="h-[664px] flex shrink-0">
        <LeftRail />
        <NavPanel />
        <Viewport />
      </div>
      <div className="h-[23px] bg-white border-t border-[#aaa] shrink-0" />

      {/* hand drawn mark over the tree, and the watermark over the window */}
      <svg width="108" height="44" viewBox="0 0 108 44" className="absolute left-[72px] top-[284px]">
        <path d="M4 23C4 12 30 3 58 3S104 11 104 23 80 41 52 41 4 34 4 23Z" fill="none" stroke="#d01414" strokeWidth="3.5" />
      </svg>
      <Watermark />
      <span className="absolute left-[1070px] top-[850px] w-[170px] h-[3px] bg-white/70" />
    </div>
  )
}
